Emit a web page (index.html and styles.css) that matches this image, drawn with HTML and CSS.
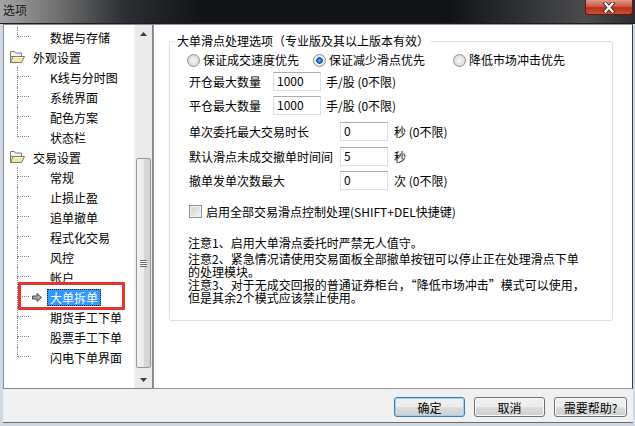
FILE: index.html
```html
<!doctype html>
<html>
<head>
	<meta charset="utf-8">
	<link rel="stylesheet" href="styles.css">
</head>
<body>

<div class="window">
	<div class="titlebar">
		<span class="title">选项</span>
		<span class="close-btn">
			<svg width="18" height="11" viewBox="0 0 18 11">
				<path d="M5.5 1.5l7 8M12.5 1.5l-7 8" stroke="#3a2a28" stroke-width="4" stroke-linecap="square"/>
				<path d="M5.5 1.5l7 8M12.5 1.5l-7 8" stroke="#fff" stroke-width="2.2" stroke-linecap="square"/>
			</svg>
		</span>
	</div>

	<div class="frame">
		<div class="client">
			<div class="main">

				<div class="tree">
					<ul class="tree-list">
						<li class="row child last"><span class="branch"><i></i><i></i></span><span class="slot"></span><span class="label">数据与存储</span></li>
						<li class="row parent">
							<svg class="folder" width="16" height="14" viewBox="0 0 16 14">
								<path d="M1.5 1.5h4l1 1.5h6v3.5h-11z" fill="#f4f4f4" stroke="#7b7b7b"/>
								<path d="M1.5 2v10.5h10" fill="none" stroke="#7b7b7b"/>
								<path d="M4 6.5h11.5l-3 6h-11z" fill="#f5e79a" stroke="#777"/>
								<path d="M5 7.5h9" stroke="#fffbe0"/>
							</svg>
							<span class="label">外观设置</span>
						</li>
						<li class="row child"><span class="branch"><i></i><i></i></span><span class="slot"></span><span class="label">K线与分时图</span></li>
						<li class="row child"><span class="branch"><i></i><i></i></span><span class="slot"></span><span class="label">系统界面</span></li>
						<li class="row child"><span class="branch"><i></i><i></i></span><span class="slot"></span><span class="label">配色方案</span></li>
						<li class="row child last"><span class="branch"><i></i><i></i></span><span class="slot"></span><span class="label">状态栏</span></li>
						<li class="row parent">
							<svg class="folder" width="16" height="14" viewBox="0 0 16 14">
								<path d="M1.5 1.5h4l1 1.5h6v3.5h-11z" fill="#f4f4f4" stroke="#7b7b7b"/>
								<path d="M1.5 2v10.5h10" fill="none" stroke="#7b7b7b"/>
								<path d="M4 6.5h11.5l-3 6h-11z" fill="#f5e79a" stroke="#777"/>
								<path d="M5 7.5h9" stroke="#fffbe0"/>
							</svg>
							<span class="label">交易设置</span>
						</li>
						<li class="row child"><span class="branch"><i></i><i></i></span><span class="slot"></span><span class="label">常规</span></li>
						<li class="row child"><span class="branch"><i></i><i></i></span><span class="slot"></span><span class="label">止损止盈</span></li>
						<li class="row child"><span class="branch"><i></i><i></i></span><span class="slot"></span><span class="label">追单撤单</span></li>
						<li class="row child"><span class="branch"><i></i><i></i></span><span class="slot"></span><span class="label">程式化交易</span></li>
						<li class="row child"><span class="branch"><i></i><i></i></span><span class="slot"></span><span class="label">风控</span></li>
						<li class="row child"><span class="branch"><i></i><i></i></span><span class="slot"></span><span class="label">帐户</span></li>
						<li class="row child selected">
							<span class="branch"><i></i><i></i></span>
							<span class="slot">
								<svg width="10" height="9" viewBox="0 0 10 9">
									<path d="M0.5 3h4.5v-2.5l4.5 4-4.5 4v-2.5h-4.5z" fill="#a6a6a6" stroke="#4a4a4a"/>
								</svg>
							</span>
							<span class="label">大单拆单</span>
							<span class="mark"></span>
						</li>
						<li class="row child"><span class="branch"><i></i><i></i></span><span class="slot"></span><span class="label">期货手工下单</span></li>
						<li class="row child"><span class="branch"><i></i><i></i></span><span class="slot"></span><span class="label">股票手工下单</span></li>
						<li class="row child last"><span class="branch"><i></i><i></i></span><span class="slot"></span><span class="label">闪电下单界面</span></li>
					</ul>

					<div class="scrollbar">
						<div class="sb-btn">
							<svg width="7" height="4" viewBox="0 0 7 4"><path d="M0 4L3.5 0 7 4z" fill="#3c3c3c"/></svg>
						</div>
						<div class="sb-track">
							<div class="sb-thumb"><span class="grip"></span></div>
						</div>
						<div class="sb-btn">
							<svg width="7" height="4" viewBox="0 0 7 4"><path d="M0 0L3.5 4 7 0z" fill="#3c3c3c"/></svg>
						</div>
					</div>
				</div>

				<div class="panel">
					<fieldset class="group">
						<legend>大单滑点处理选项（专业版及其以上版本有效）</legend>
						<div class="group-body">
							<div class="radio-row">
								<label class="opt"><span class="radio"></span>保证成交速度优先</label>
								<label class="opt"><span class="radio checked"></span>保证减少滑点优先</label>
								<label class="opt"><span class="radio"></span>降低市场冲击优先</label>
							</div>

							<div class="field short" id="rowOpen">
								<span class="field-label">开仓最大数量</span>
								<input class="num" type="text" value="1000">
								<span class="unit">手/股 (0不限)</span>
							</div>
							<div class="field short" id="rowClose">
								<span class="field-label">平仓最大数量</span>
								<input class="num" type="text" value="1000">
								<span class="unit">手/股 (0不限)</span>
							</div>

							<div class="field long" id="rowTime">
								<span class="field-label">单次委托最大交易时长</span>
								<input class="num" type="text" value="0">
								<span class="unit wide">秒 (0不限)</span>
							</div>
							<div class="field long" id="rowCancel">
								<span class="field-label">默认滑点未成交撤单时间间</span>
								<input class="num" type="text" value="5">
								<span class="unit wide">秒</span>
							</div>
							<div class="field long" id="rowResend">
								<span class="field-label">撤单发单次数最大</span>
								<input class="num" type="text" value="0">
								<span class="unit wide">次 (0不限)</span>
							</div>

							<label class="check-row"><span class="checkbox"></span>启用全部交易滑点控制处理(SHIFT+DEL快捷键)</label>

							<div class="notes">
								<p>注意1、启用大单滑点委托时严禁无人值守。</p>
								<p>注意2、紧急情况请使用交易面板全部撤单按钮可以停止正在处理滑点下单<br>的处理模块。</p>
								<p>注意3、对于无成交回报的普通证券柜台，“降低市场冲击”模式可以使用，<br>但是其余2个模式应该禁止使用。</p>
							</div>
						</div>
					</fieldset>
				</div>

			</div>

			<div class="footer">
				<button class="btn default">确定</button>
				<button class="btn" id="cancel">取消</button>
				<button class="btn" id="help">需要帮助?</button>
			</div>
		</div>
	</div>
</div>

</body>
</html>
```

FILE: styles.css
```css
html, body {
    margin: 0;
    padding: 0;
}

body {
    width: 635px;
    height: 426px;
    overflow: hidden;
    font: 12px "Noto Sans CJK SC", "Liberation Sans", sans-serif;
    color: #000;
    background: #cfd9e4;
}

.window {
    display: flex;
    flex-direction: column;
    height: 426px;
}

/* title bar */

.titlebar {
    display: flex;
    justify-content: space-between;
    height: 23px;
    border-bottom: 1px solid #1c1c1e;
    background: linear-gradient(90deg, #a3a3a3 0, #727272 55px, #2c2e33 125px, #121418 200px, #111317 450px, #3a3b3e 545px, #4b4b4c 585px, #2e2e30 635px);
}

.title {
    padding: 1px 0 0 3px;
    line-height: 17px;
    color: #111;
    text-shadow: 0 0 4px rgba(255, 255, 255, 0.35);
}

.close-btn {
    display: flex;
    align-items: center;
    justify-content: center;
    width: 46px;
    height: 14px;
    margin-right: 2px;
    border: 1px solid #5a1a12;
    border-top: none;
    border-radius: 0 0 4px 4px;
    background: linear-gradient(#e19a8b 0, #cf5a45 45%, #b5301c 55%, #d0502f 100%);
}

/* frame + client */

.frame {
    flex: 1;
    display: flex;
    padding: 0 2px 3px 3px;
}

.client {
    flex: 1;
    display: flex;
    flex-direction: column;
    background: #f0f0f0;
    border-bottom: 1px solid #6a6a6a;
}

.main {
    display: flex;
    height: 365px;
}

/* tree */

.tree {
    display: flex;
    width: 150px;
    box-sizing: border-box;
    border: 1px solid #828790;
    background: #fff;
}

.tree-list {
    flex: 1;
    list-style: none;
    margin: 0;
    padding: 2px 0 0 0;
}

.row {
    display: flex;
    align-items: center;
    height: 20px;
    white-space: nowrap;
}

.row.parent {
    padding-left: 5px;
}

.folder {
    display: block;
    margin-right: 5px;
}

.branch {
    display: flex;
    flex-direction: column;
    width: 12px;
    height: 20px;
    margin-left: 13px;
}

.branch i {
    display: block;
    height: 10px;
    box-sizing: border-box;
    border-left: 1px dotted #8a8a8a;
}

.branch i:first-child {
    border-bottom: 1px dotted #8a8a8a;
}

.row.last .branch i:last-child {
    border-left-color: transparent;
}

.slot {
    display: flex;
    align-items: center;
    width: 16px;
    height: 20px;
    margin-left: 2px;
}

.slot svg {
    display: block;
    margin-left: 1px;
}

.label {
    padding: 0 2px;
    line-height: 15px;
    border: 1px solid transparent;
}

.row.selected {
    position: relative;
}

.row.selected .label {
    background: #3399ff;
    color: #fff;
    border: 1px dotted #222;
}

.mark {
    position: absolute;
    left: 14px;
    top: -5px;
    width: 107px;
    height: 28px;
    box-sizing: border-box;
    border: 3px solid #e8322f;
}

.scrollbar {
    display: flex;
    flex-direction: column;
    width: 17px;
    background: #eaeaea;
    border-left: 1px solid #f4f4f4;
}

.sb-btn {
    display: flex;
    align-items: center;
    justify-content: center;
    height: 17px;
}

.sb-btn svg {
    display: block;
}

.sb-track {
    flex: 1;
}

.sb-thumb {
    display: flex;
    align-items: center;
    justify-content: center;
    height: 210px;
    margin: 116px 1px 0 1px;
    box-sizing: border-box;
    border: 1px solid #979797;
    border-radius: 2px;
    background: linear-gradient(90deg, #f3f3f3 0, #e9e9e9 50%, #d9d9d9 51%, #d2d2d2 100%);
}

.grip {
    width: 7px;
    height: 7px;
    background: repeating-linear-gradient(#6e6e6e 0, #6e6e6e 1px, #fafafa 1px, #fafafa 2px);
}

/* right panel */

.panel {
    flex: 1;
    box-sizing: border-box;
    border: 1px solid #8f949c;
    border-right-color: #3c3c3c;
    background: #fff;
}

.group {
    width: 444px;
    height: 287px;
    min-width: 0;
    box-sizing: border-box;
    margin: 9px 0 0 15px;
    padding: 0 0 0 5px;
    border: 1px solid #d5dfe5;
    border-radius: 3px;
}

.group legend {
    padding: 0 2px;
    line-height: 14px;
}

.group-body {
    padding-left: 12px;
}

.radio-row {
    display: grid;
    grid-template-columns: 126px 140px auto;
    height: 16px;
    margin-top: 4px;
    line-height: 16px;
}

.opt {
    display: flex;
    align-items: center;
    gap: 3px;
}

.radio {
    width: 13px;
    height: 13px;
    box-sizing: border-box;
    border-radius: 50%;
    border: 1px solid #8e8f8f;
    background: radial-gradient(circle, #f7f7f7 0, #e2e2e2 55%, #cbcbcb 100%);
}

.radio.checked {
    background: radial-gradient(circle, #7cc3ff 0, #2a7fdc 1.5px, #0c4fa8 3px, #f2f2f2 3.6px, #dcdcdc 100%);
}

.field {
    display: flex;
    align-items: center;
    height: 19px;
    padding-left: 2px;
    white-space: nowrap;
}

.field.short .field-label {
    width: 84px;
}

.field.long .field-label {
    width: 151px;
}

#rowOpen { margin-top: 4px; }
#rowClose { margin-top: 5px; }
#rowTime { margin-top: 7px; }
#rowCancel { margin-top: 6px; }
#rowResend { margin-top: 5px; }

.num {
    width: 48px;
    height: 19px;
    box-sizing: border-box;
    margin: 0;
    padding: 0 0 2px 3px;
    font: 12px "Noto Sans CJK SC", "Liberation Sans", sans-serif;
    color: #000;
    border: 1px solid #dbdfe6;
    border-top-color: #abadb3;
    outline: none;
}

.unit {
    margin-left: 5px;
}

.unit.wide {
    margin-left: 6px;
}

.check-row {
    display: flex;
    align-items: center;
    gap: 4px;
    height: 14px;
    margin-top: 14px;
    padding-left: 2px;
    white-space: nowrap;
}

.checkbox {
    width: 13px;
    height: 13px;
    box-sizing: border-box;
    border: 1px solid #8e8f8f;
    box-shadow: inset 0 0 0 1px #f4f4f4;
    background: linear-gradient(135deg, #cfcfcf 0, #e6e6e6 60%, #f6f6f6 100%);
}

.notes {
    margin-top: 18px;
    padding-left: 1px;
}

.notes p {
    margin: 0;
    line-height: 13px;
    white-space: nowrap;
}

.notes p + p {
    margin-top: 3px;
}

.notes p:last-child {
    margin-top: 0;
}

/* footer */

.footer {
    display: flex;
    justify-content: flex-end;
    height: 33px;
    box-sizing: border-box;
    padding: 8px 6px 0 0;
}

.btn {
    width: 71px;
    height: 20px;
    margin: 0;
    padding: 0;
    font: 12px "Noto Sans CJK SC", "Liberation Sans", sans-serif;
    color: #000;
    border: 1px solid #707070;
    border-radius: 3px;
    background: linear-gradient(#f2f2f2 0, #ebebeb 50%, #dddddd 51%, #cfcfcf 100%);
    box-shadow: inset 0 0 0 1px #fcfcfc;
}

.btn.default {
    border-color: #3c7fb1;
    box-shadow: inset 0 0 0 1px #98d1ef;
}

#cancel {
    margin-left: 9px;
}

#help {
    width: 73px;
    margin-left: 9px;
}
```
